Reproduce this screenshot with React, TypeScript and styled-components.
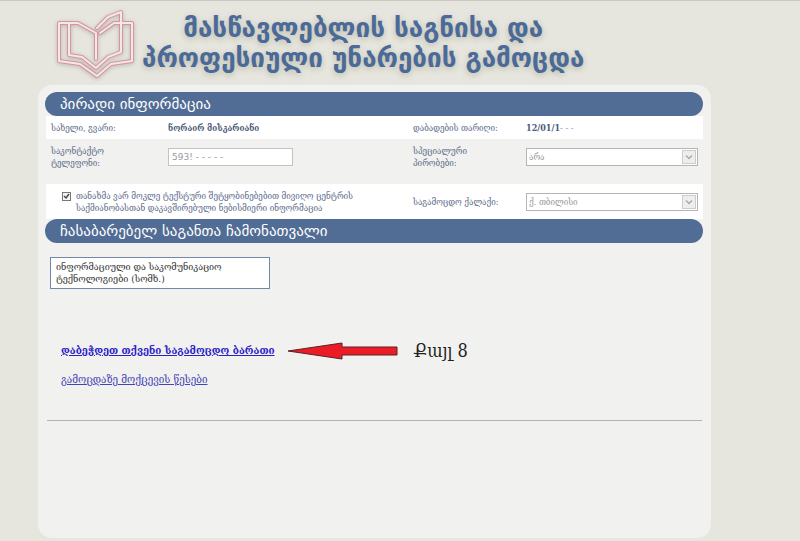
import React from 'react';
import styled, { createGlobalStyle } from 'styled-components';

const GlobalStyle = createGlobalStyle`
  * { box-sizing: border-box; }
  body {
    margin: 0;
    background: #e6e6de;
    font-family: 'DejaVu Serif Condensed', 'DejaVu Serif', serif;
    font-size: 9px;
    line-height: 12px;
    color: #5c6b8a;
  }
`;

const Page = styled.div`
  border-top: 1px solid #c9c8c2;
  padding: 0 89px 3px 38px;
`;

const Header = styled.header`
  display: flex;
  align-items: flex-start;
  gap: 6px;
  height: 84px;
  padding: 7px 0 0 16px;
`;

const Logo = styled.svg`
  flex: none;
  width: 82px;
  height: 74px;
  filter: drop-shadow(0 1px 2px #bab5ac);
`;

const Title = styled.h1`
  margin: 5px 0 0;
  font-family: 'DejaVu Sans', sans-serif;
  font-size: 26px;
  line-height: 30px;
  font-weight: bold;
  text-align: center;
  white-space: nowrap;
  color: #4b6a98;
  text-shadow: 0 2px 6px #b9b8ab;
`;

const Panel = styled.main`
  min-height: 453px;
  padding: 7px 8px;
  border-radius: 14px;
  background: #f1f1ef;
`;

const Bar = styled.h2`
  margin: 0 0 0 -1px;
  height: 24px;
  padding-left: 15px;
  border-radius: 12px;
  background: #516d95;
  color: #fff;
  font-family: 'DejaVu Sans', sans-serif;
  font-size: 15px;
  line-height: 24px;
  font-weight: normal;
  white-space: nowrap;
`;

const Row = styled.div<{ $height: number; $white?: boolean; $top?: boolean }>`
  display: grid;
  grid-template-columns: 117px 245px 113px minmax(0, 1fr);
  align-items: center;
  min-height: ${p => p.$height}px;
  padding: ${p => (p.$top ? '0 5px 10px' : '0 5px')};
  background: ${p => (p.$white ? '#fff' : 'transparent')};
`;

const Label = styled.label`
  max-width: 104px;
`;

const Value = styled.strong`
  color: #4c5b7a;
`;

const Masked = styled.span`
  font-weight: normal;
  color: #9aa1ae;
`;

const PhoneInput = styled.input`
  width: 125px;
  height: 18px;
  padding: 0 3px;
  border: 1px solid #c4c4c4;
  background: #fff;
  color: #999;
  font: 9px 'DejaVu Sans', sans-serif;
`;

const SelectFrame = styled.div`
  display: grid;
  grid-template-columns: minmax(0, 1fr) 14px;
  align-items: center;
  height: 18px;
  padding-right: 1px;
  border: 1px solid #b5b5b5;
  background: #fff;
`;

const Select = styled.select`
  grid-area: 1 / 1 / 2 / 3;
  width: 100%;
  height: 16px;
  padding: 0 16px 0 2px;
  border: 0;
  appearance: none;
  background: transparent;
  color: #999;
  font: 9px/16px 'DejaVu Serif Condensed', 'DejaVu Serif', serif;
`;

const SelectArrow = styled.svg`
  grid-area: 1 / 2 / 2 / 3;
  width: 14px;
  height: 14px;
  border: 1px solid #ccc;
  background: #eee;
  pointer-events: none;
`;

const Consent = styled.label`
  grid-column: span 2;
  display: flex;
  align-items: flex-start;
  gap: 5px;
  padding-left: 11px;
  white-space: nowrap;
`;

const Checkbox = styled.input`
  appearance: none;
  flex: none;
  width: 9px;
  height: 9px;
  margin: 2px 0 0;
  border: 1px solid #777;
  background: #f4f4f4 url("data:image/svg+xml,%3Csvg xmlns='http://www.w3.org/2000/svg' viewBox='0 0 7 7'%3E%3Cpath d='M1 3l2 2 3-4' fill='none' stroke='%23444' stroke-width='1.4'/%3E%3C/svg%3E") center / 7px 7px;
`;

const Subject = styled.div`
  width: 220px;
  min-height: 32px;
  margin: 14px 0 0 4px;
  padding: 3px 5px;
  border: 1px solid #7188ab;
  background: #fff;
  color: #333;
  font-size: 10px;
`;

const Actions = styled.section`
  display: flex;
  flex-direction: column;
  align-items: flex-start;
  gap: 10px;
  margin: 50px 1px 0;
  padding: 0 0 33px 14px;
  border-bottom: 1px solid #a9b8b4;
`;

const Step = styled.div`
  display: flex;
  align-items: center;
  gap: 12px;
  height: 24px;
`;

const Link = styled.a<{ $strong?: boolean }>`
  font-size: 11px;
  line-height: 14px;
  white-space: nowrap;
  font-weight: ${p => (p.$strong ? 'bold' : 'normal')};
  color: ${p => (p.$strong ? '#2a22c8' : '#4444b4')};
`;

const Arrow = styled.svg`
  width: 111px;
  height: 18px;
`;

const Caption = styled.span`
  padding-left: 4px;
  font: 18px/24px 'DejaVu Serif Condensed', 'DejaVu Serif', serif;
  color: #222;
`;

const bookLines = [
  'M42 51 V25 L24 15 H5 V53 L26 56 L43 68 L57 56 L78 53 V15 H60 L46 25',
  'M15 15 V47 L28 49 L42 60 L54 49 L67 44 V4 L54 9 L43 20',
];

function Dropdown({ id, value }: { id: string; value: string }) {
  return (
    <SelectFrame>
      <Select id={id} defaultValue={value}>
        <option>{value}</option>
      </Select>
      <SelectArrow viewBox="0 0 12 12" aria-hidden="true">
        <path d="M3 4.5 L6 7.5 L9 4.5" fill="none" stroke="#aaa" strokeWidth="1.5" />
      </SelectArrow>
    </SelectFrame>
  );
}

export default function App() {
  return (
    <>
      <GlobalStyle />
      <Page>
        <Header>
          <Logo viewBox="0 0 82 74" aria-hidden="true">
            <g fill="none" strokeLinejoin="round" strokeLinecap="round">
              {bookLines.map(d => <path key={d} d={d} stroke="#d495a3" strokeWidth="4" />)}
              {bookLines.map(d => <path key={d} d={d} stroke="#f6e6e7" strokeWidth="2" />)}
            </g>
          </Logo>
          <Title>
            მასწავლებლის საგნისა და<br />
            პროფესიული უნარების გამოცდა
          </Title>
        </Header>
        <Panel>
          <Bar>პირადი ინფორმაცია</Bar>
          <Row $height={23} $white>
            <span>სახელი, გვარი:</span>
            <Value>ნორაირ მისკარიანი</Value>
            <span>დაბადების თარიღი:</span>
            <Value>12/01/1<Masked>- - -</Masked></Value>
          </Row>
          <Row $height={45} $top>
            <Label htmlFor="phone">საკონტაქტო<br />ტელეფონი:</Label>
            <PhoneInput id="phone" defaultValue="593! - - - - -" />
            <Label htmlFor="conditions">სპეციალური<br />პირობები:</Label>
            <Dropdown id="conditions" value="არა" />
          </Row>
          <Row $height={35} $white>
            <Consent>
              <Checkbox type="checkbox" defaultChecked />
              <span>
                თანახმა ვარ მოკლე ტექსტური შეტყობინებებით მივიღო ცენტრის<br />
                საქმიანობასთან დაკავშირებული ნებისმიერი ინფორმაცია
              </span>
            </Consent>
            <Label htmlFor="city">საგამოცდო ქალაქი:</Label>
            <Dropdown id="city" value="ქ. თბილისი" />
          </Row>
          <Bar>ჩასაბარებელ საგანთა ჩამონათვალი</Bar>
          <Subject>
            ინფორმაციული და საკომუნიკაციო<br />
            ტექნოლოგიები (სომხ.)
          </Subject>
          <Actions>
            <Step>
              <Link $strong href="#card">დაბეჭდეთ თქვენი საგამოცდო ბარათი</Link>
              <Arrow viewBox="0 0 111 18" aria-hidden="true">
                <path d="M1 9 L55 1 V5 H110 V13 H55 V17 Z" fill="#ec1c24" stroke="#5a2226" />
              </Arrow>
              <Caption>Քայլ 8</Caption>
            </Step>
            <Link href="#rules">გამოცდაზე მოქცევის წესები</Link>
          </Actions>
        </Panel>
      </Page>
    </>
  );
}
